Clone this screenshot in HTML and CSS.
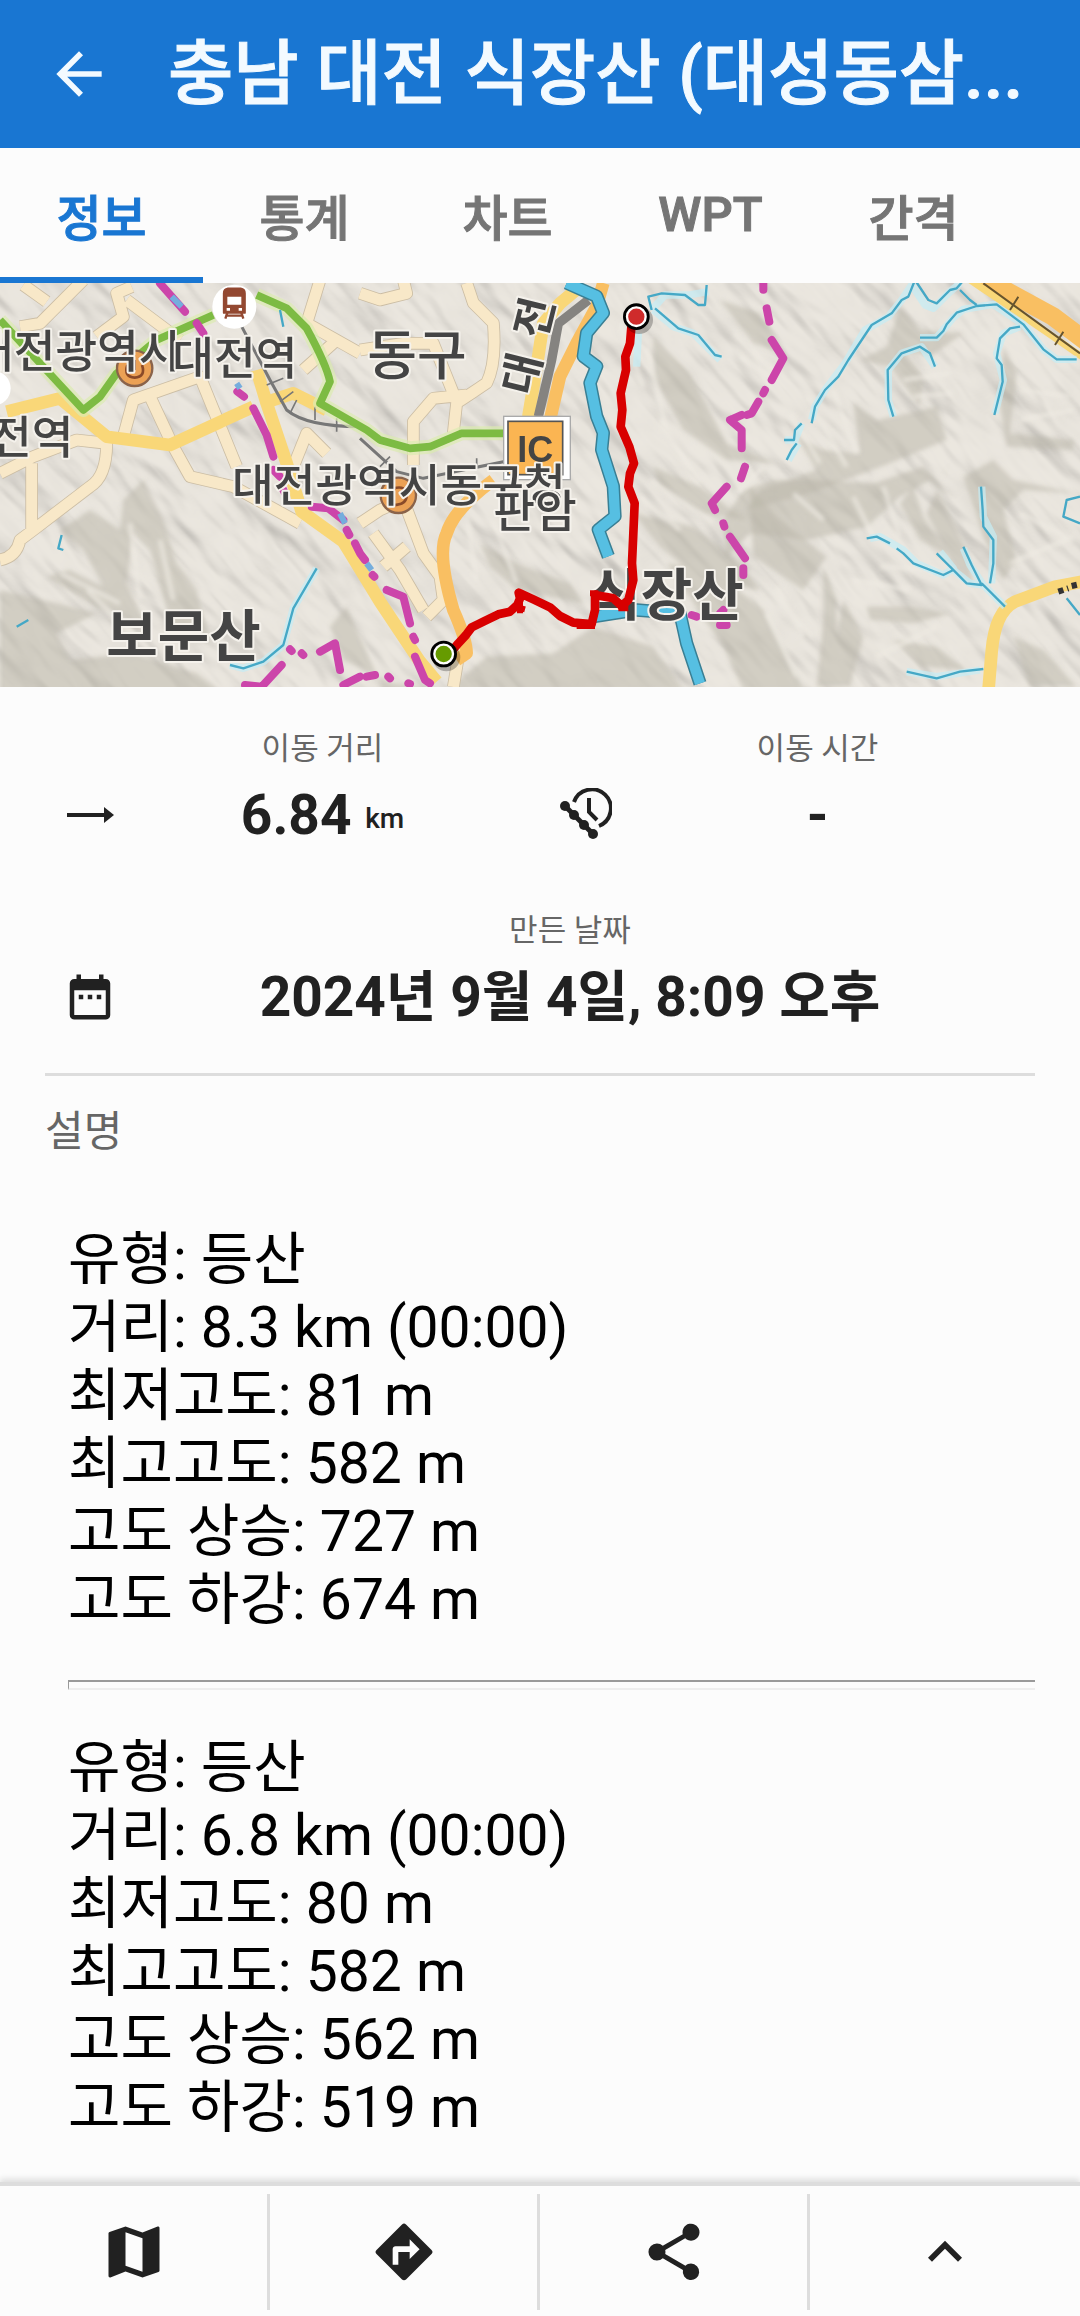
FILE: index.html
```html
<!DOCTYPE html>
<html lang="ko">
<head>
  <meta charset="utf-8">
  <meta name="viewport" content="width=device-width, initial-scale=1">
  <title>충남 대전 식장산</title>
  <link rel="stylesheet" href="styles.css">
</head>
<body>

<header class="appbar">
  <button class="back" aria-label="뒤로">
    <svg viewBox="0 0 24 24"><path d="M20 11H7.83l5.59-5.59L12 4l-8 8 8 8 1.41-1.41L7.83 13H20z"/></svg>
  </button>
  <h1>충남 대전 식장산 (대성동삼...</h1>
</header>

<nav class="tabs" role="tablist">
  <button role="tab" class="tab active" aria-selected="true">정보</button>
  <button role="tab" class="tab">통계</button>
  <button role="tab" class="tab">차트</button>
  <button role="tab" class="tab">WPT</button>
  <button role="tab" class="tab">간격</button>
</nav>

<main>
  <svg class="map" viewBox="0 9 3240 1212" preserveAspectRatio="xMidYMid slice" role="img" aria-label="지도">
    <defs>
      <filter id="relief" x="0" y="0" width="100%" height="100%">
        <feTurbulence type="fractalNoise" baseFrequency="0.003 0.008" numOctaves="3" seed="11"/>
        <feDiffuseLighting surfaceScale="65" diffuseConstant="1.2" lighting-color="#e9e5dc">
          <feDistantLight azimuth="235" elevation="58"/>
        </feDiffuseLighting>
      </filter>
      <filter id="soft"><feGaussianBlur stdDeviation="7"/></filter>
    </defs>

    <rect class="land" y="9" width="3240" height="1212"/>
    <g transform="rotate(48 1620 600)" opacity=".2">
      <rect x="-300" y="-1400" width="3900" height="4000" filter="url(#relief)"/>
    </g>

    <!-- hill shading -->
    <g class="shade" filter="url(#soft)">
      <path d="M430 600l-60 60-10 90-90-60-90 60 70 60 60 110-100-50-70 20 150 90 150 60-60-130 20-150 50 50 70 250 110 30-40-160-60-80-40-130z"/>
      <path d="M0 930l130 30 160 40-120 60 40 80 190-20 190 60 120 90H0z"/>
      <path d="M1040 980l-50 60 40 100 150 70 160 20 120-100 200-10 120-80 180 60 90 130H1150z"/>
      <path d="M1440 790l110 60 160 60 40 60-200-40-80-70zM1960 170l110 110 110 210 150 60-150-10-130-90-90-160zM1960 560l140 60 140 100-130-20-130-80z"/>
      <path d="M1900 700l180 40 140 110 60 80-180-30-120-100zM2000 850l140 20 150 120 120 240H2230l-60-130z"/>
      <path d="M2160 60l120 40 70 120-90-30zM2560 370l70 50 180-40 30 100-170 70-240 90-190 50 40-60 170-60-60-100 80 40 110 10z"/>
      <path d="M2440 600l180 10 150-50 80 90-60-50-90 50-100 90-180 40-170-20-70 70-10-110 60-90 90-30z"/>
      <path d="M2250 620l70 80 70 60 90 70-70 100-150-100zM2470 860l40 100v220l40 40h-100l20-200zM2530 960l60 110-40 150h-70z"/>
      <path d="M2700 80l60 70 130 10-100 70-80-20 60 80-10 90-90-120-90-20 80-40zM3010 200l40 80-20 180 190 20v30l-200-10-20-120zM2980 540l60 60 190 40-160-10-60 60 40 150-40 60-60-130-60-180z"/>
      <path d="M2850 540l-40 90 90 180 20 110-70-80-70-140zM2740 620l30 90 80 120-90-50-60-110zM3040 1070l90 40 100 110h-140z"/>
      <path d="M2600 980l130 0 120 20-110 30-130-10zM2680 1080l130 20 90 70-140-10z"/>
    </g>
    <g class="light" filter="url(#soft)">
      <path d="M2200 160l130 120M2220 230l90 60M2370 400l90 150M2420 350l120 210M2500 330l70 190M2290 560l-80 80M2380 640l90 80M2560 650l60 120M2650 620l50 150M2850 280l-140 20M2860 340l-120 10M3060 330l150 20M3060 420l160-30M3030 850l190-80M3060 700l160 80M2560 900l170 30M2640 860l180 10M2630 1130l180-90M2250 870l190 200M2330 920l80 150M2300 1000l90 190M1860 130l70 190M1940 200l60 250M1980 420l120 190M1950 600l190 130M1920 650l120 100M1400 700l30 200M1480 720l70 190M390 730l30 230M480 780l40 180M180 880l180 90M260 930l200 190"/>
    </g>

    <!-- minor roads -->
    <g class="road-edge">
      <path d="M0 840q50-10 60-60l40-30 170-130q50-30 50-130l-90-10-130 50-100 50M95 550v200M60 140l60-10L250 0M70 15l70 50M395 20l-45 20 20 70-80 60M380 60l160 120M370 470l30-110 200-70 110 270M450 350l70 150 50 90 130 30 200 110M960 0l-40 130 160 90M1010 180l-100 90M880 560l40-100 60 60"/>
      <path d="M1080 40l60 20 80-20-10-40M1400 9l20 60 60 60q10 120-20 180l-90 60-10 90M1080 210l130-20 90 0 60 150M1400 345l-100 10-60 70v130M1080 730l60-40 70-30 60 160 50 70 10 70-50 50M1120 760l80 110 70 120M1150 860l70-60M1360 1221l20-120"/>
    </g>
    <g class="road">
      <path d="M0 840q50-10 60-60l40-30 170-130q50-30 50-130l-90-10-130 50-100 50M95 550v200M60 140l60-10L250 0M70 15l70 50M395 20l-45 20 20 70-80 60M380 60l160 120M370 470l30-110 200-70 110 270M450 350l70 150 50 90 130 30 200 110M960 0l-40 130 160 90M1010 180l-100 90M880 560l40-100 60 60"/>
      <path d="M1080 40l60 20 80-20-10-40M1400 9l20 60 60 60q10 120-20 180l-90 60-10 90M1080 210l130-20 90 0 60 150M1400 345l-100 10-60 70v130M1080 730l60-40 70-30 60 160 50 70 10 70-50 50M1120 760l80 110 70 120M1150 860l70-60M1360 1221l20-120"/>
    </g>

    <!-- main roads -->
    <path class="major" d="M20 395l160-40 140 115 190 25 250-115M770 270l30 100 60 180 45 145 125 90 110 180 120 180 50 60M790 370l90-30 100 50"/>
    <path class="expressway" d="M1810 9l-20 70-60 110-50 100-30 130M1480 600q-120 90-140 160-30 60 20 230 40 90 40 130l-30 20"/>
    <path class="major" d="M1740 20l-60 50-50 60-20 130-25 150"/>
    <path class="rail-wide" d="M1765 60l-90 70-20 110-40 170"/>
    <path class="rail" d="M720 130l90 170 50 90q60 50 220 50M1080 475l110 100 80 20 240-50"/>
    <path class="rail-ticks" d="M800 315l50-20M840 365l40-30M870 400l20-40M945 420v-40M1010 455v-40M1140 560l30-30M1430 565v-30"/>
    <path class="metro-glow" d="M0 120l250 270 50-40 50-70 120-100 170-75M770 45l90 40 60 60q60 110 70 160l-30 65 140 80 40 30 90 25 60-5 95-40h140"/>
    <path class="metro" d="M0 120l250 270 50-40 50-70 120-100 170-75M770 45l90 40 60 60q60 110 70 160l-30 65 140 80 40 30 90 25 60-5 95-40h140"/>
    <path class="expressway wide" d="M2940 -10l220 120 120 90"/>
    <path class="major narrow" d="M2910 0l220 150 130 90"/>
    <path class="tie" d="M2950 10l290 210M3055 50l-25 40M3190 155l-25 40"/>
    <path class="major" d="M2965 1235l10-120q10-120 70-150l120-45 80-15"/>
    <path class="dots" d="M3175 935l30-10M3215 918l25-6"/>

    <!-- streams -->
    <g class="stream-glow">
      <path d="M2435 420l10-40 30-50 60-80 60-100 70-40 40-50 30-45 40 60 25 10 50-50 30-25M2760 173h50l50-60 30-25 90-15 90 60 60 75 40 30h60M3060 140l-50 20-20 60 20 80-25 100M2680 410l-15-50 0-90 40-50 60-20 40 60M2405 430l-20 50-30 0M2395 490l-30 50"/>
      <path d="M2610 775l30-5 70 40 40 40 80 35 30-20-40-50M2860 870l50 40 40 5-40-60-20-50M2945 910l70 70M2975 910l5-140-30-60-5-90M2720 1175l90 15 130-20"/>
      <path d="M950 865l-70 120-30 110-60 50-60 20-40-10M1955 90l40-45h70l60-10M1960 90l60 50 60 20 80 80M1915 160l-5 100"/>
    </g>
    <g class="stream">
      <path d="M2435 430l10-50 30-50 40-40 30-50 70-105 60-35 30-40 20-10 20-50 40 60 25 10 40-40 20-5 30-35M2760 173h50l20-20 10-20 30-35 60-20 60-5 20 15 60 45 60 75 40 30h60M3060 140l-30 5-30 30-10 60 15 20 3 50-25 100M2680 410l-15-50-2-90 42-50 55-20 30 20 15 40M2405 430l-20 20-3 30-30 0M2390 490l-15 20-15 30"/>
      <path d="M2600 775l30-5 40 20M2690 805l20 15 30 30 90 35 30-15-50-50M2850 860l50 50 45 5-30-60-25-55M2945 910l70 70M2970 910l10-60v-70l-30-40-2-50-5-70M2720 1175l90 20 70-20 70-8M2880 30l30 30 20 15M3240 650l-40 10-10 50 50 20M3200 955l40 50"/>
      <path d="M950 865l-70 120-30 110-60 50-60 20-40-10M185 765l-10 40 15 5M50 1040l35-20M840 90l10 50M1955 90l-10-40 40-10 70 5 40 30h20l5-60M1965 85l70 60 60 20 50 60 20 5"/>
    </g>

    <!-- river -->
    <g class="river-edge">
      <path d="M1700 9l90 40 20 50-50 60-10 70 40 30-20 50 20 100 20 50-5 50 35 110 5 90-50 40 30 80M1780 1010l130-20 130 10 20 90 40 120"/>
    </g>
    <path class="river" d="M1700 9l90 40 20 50-50 60-10 70 40 30-20 50 20 100 20 50-5 50 35 110 5 90-50 40 30 80M1780 1010l130-20 130 10 20 90 40 120"/>

    <!-- district borders -->
    <g class="border">
      <path d="M480 10l75 85M590 130l20 30M712 335l20 15M760 385l40 80 20 65M820 570l20 20M845 620l10 20M935 680l50 5 45 35M1040 750l8 15M1065 790l15 30 15 20M1118 885l5 5M1160 930l50 20 20 80M1240 1070l5 10M1245 1130l30 70 15 10M960 1115l45-25 15 80M870 1108l5 5M905 1120l5 5M735 1215l50 5 60-65M1030 1215l50-25M1100 1190l25-5M1165 1190l5 5M1225 1210l5 2"/>
      <path d="M2290 9l0 20M2300 85l8 40M2315 180l35 55-35 65M2295 330l-5 10M2275 365l-20 35-15 5M2225 405l-35 15 35 30v55M2235 560l-12 35M2180 620l-45 50 10 20M2170 730l3 10M2190 770l45 65M2230 865l0 20M2170 990l-10 10M2090 1010l-15-5M2180 1035l-20 0"/>
    </g>
    <path class="border-blue" d="M515 50l30 30M1100 850l15 20M1020 700l15 30M710 310l10 15"/>

    <!-- place icons -->
    <circle cx="703" cy="80" r="66" fill="#fff"/>
    <g class="train">
      <path class="body" d="M672 40q0-12 12-14h38q12 2 12 14v58H672z"/>
      <path d="M682 98l-6 18M724 98l6 18M676 107h54"/>
      <path class="pane" d="M682 50h42v24h-42zM680 84h10v8h-10zM716 84h10v8h-10z"/>
    </g>
    <circle cx="-20" cy="325" r="52" fill="#fff"/>
    <g class="spot">
      <circle cx="404" cy="265" r="53"/><path d="M382 255q-12 35 22 38 34-3 22-38M404 240v30"/>
      <circle cx="1195" cy="646" r="53"/><path d="M1180 625q40-10 40 20t-40 30"/>
    </g>
    <rect class="ic-frame" x="1511" y="409" width="200" height="190"/>
    <rect class="ic" x="1524" y="424" width="164" height="160"/>

    <!-- labels -->
    <g class="place">
      <text x="-84" y="264">대전광역시</text>
      <text x="517" y="286">대전역</text>
      <text x="-30" y="522">전역</text>
      <text x="696" y="666">대전광역시동구청</text>
      <text x="1480" y="744">판암</text>
      <text class="town" x="1102" y="286">동구</text>
      <text class="town street" transform="translate(1596 350) rotate(-76)">대</text>
      <text class="town street" transform="translate(1634 182) rotate(-76)">전</text>
      <text class="peak" x="319" y="1127">보문산</text>
      <text class="peak" x="1768" y="1004">식장산</text>
      <text class="ic-text" x="1552" y="546">IC</text>
    </g>

    <!-- track -->
    <path class="track" d="M1350 1120L1375 1090 1398 1065 1415 1042 1450 1025 1495 1003 1530 995 1552 975 1560 955 1556 938 1600 958 1650 982 1680 1008 1720 1028 1775 1032 1785 990 1785 945 1840 955 1865 978 1885 960 1900 900 1896 850 1900 760 1904 670 1885 620 1890 580 1902 550 1888 500 1862 440 1867 390 1862 340 1878 270 1876 230 1890 190 1895 130"/>
    <path class="track thin" d="M1545 980l30 8M1560 1000v-60M1770 940h25M1855 985h30M1730 1038h55"/>
    <g class="pin">
      <circle class="drop" cx="1917" cy="120" r="38"/><circle cx="1909" cy="110" r="36"/><circle class="end" cx="1909" cy="110" r="28"/>
      <circle class="drop" cx="1339" cy="1132" r="38"/><circle cx="1331" cy="1122" r="36"/><circle class="start" cx="1331" cy="1122" r="28"/>
    </g>
  </svg>

  <section class="stats">
    <div class="stat">
      <svg class="icon" viewBox="0 0 54 54"><path d="M4 25h37v-6l10 8-10 8v-6H4z"/></svg>
      <span class="label">이동 거리</span>
      <span class="value">6.84 <small>km</small></span>
    </div>
    <div class="stat">
      <svg class="icon" viewBox="0 0 54 54">
        <g class="line">
          <path d="M16 14a19 19 0 1 1 25 24" stroke-width="4"/>
          <path d="M31 10v14l8 8" stroke-width="4"/>
          <path d="M7 18l28 28" stroke-width="5"/>
        </g>
        <circle cx="7" cy="18" r="5"/><circle cx="16" cy="27" r="5"/><circle cx="26" cy="37" r="5"/><circle cx="35" cy="46" r="5"/>
      </svg>
      <span class="label">이동 시간</span>
      <span class="value">-</span>
    </div>
    <div class="stat full">
      <svg class="icon" viewBox="0 0 24 24"><path d="M9 11H7v2h2zm4 0h-2v2h2zm4 0h-2v2h2zm2-7h-1V2h-2v2H8V2H6v2H5a2 2 0 0 0-2 2v14c0 1.100.9 2 2 2h14c1.100 0 2-.9 2-2V6c0-1.100-.9-2-2-2zm0 16H5V9h14z"/></svg>
      <span class="label">만든 날짜</span>
      <span class="value">2024년 9월 4일, 8:09 오후</span>
    </div>
  </section>

  <section class="description">
    <h2>설명</h2>
    <div class="text">
      <p>유형: 등산<br>
        거리: 8.3 km (00:00)<br>
        최저고도: 81 m<br>
        최고고도: 582 m<br>
        고도 상승: 727 m<br>
        고도 하강: 674 m</p>
      <hr>
      <p>유형: 등산<br>
        거리: 6.8 km (00:00)<br>
        최저고도: 80 m<br>
        최고고도: 582 m<br>
        고도 상승: 562 m<br>
        고도 하강: 519 m</p>
    </div>
  </section>
</main>

<footer class="bottombar">
  <button aria-label="지도">
    <svg viewBox="0 0 24 24"><path d="M20.500 3l-.16.03L15 5.100 9 3 3.360 4.900c-.21.07-.36.25-.36.480V20.500c0 .28.22.5.5.5l.16-.03L9 18.900l6 2.100 5.640-1.900c.21-.07.36-.25.36-.48V3.500c0-.28-.22-.5-.5-.5zM15 19l-6-2.110V5l6 2.110V19z"/></svg>
  </button>
  <button aria-label="길찾기">
    <svg viewBox="0 0 24 24"><path d="M21.710 11.290l-9-9a1 1 0 0 0-1.410 0l-9 9a1 1 0 0 0 0 1.410l9 9c.39.39 1.020.39 1.410 0l9-9a1 1 0 0 0 0-1.410zM14 14.500V12h-4v4.500H8V11c0-.55.45-1 1-1h5V7.500l3.500 3.500z"/></svg>
  </button>
  <button aria-label="공유">
    <svg viewBox="0 0 24 24"><path d="M18 16.080c-.76 0-1.440.3-1.960.77L8.910 12.700a3.300 3.300 0 0 0 0-1.400l7.050-4.110A3 3 0 1 0 15 5c0 .24.040.47.090.7L8.040 9.810a3 3 0 1 0 0 4.380l7.120 4.160a2.900 2.900 0 1 0 2.840-2.270z"/></svg>
  </button>
  <button aria-label="더보기">
    <svg viewBox="0 0 24 24"><path d="M12 8l-6 6 1.410 1.410L12 10.830l4.590 4.580L18 14z"/></svg>
  </button>
</footer>

</body>
</html>
```

FILE: styles.css
```css
* {
  box-sizing: border-box;
}
body {
  margin: 0;
  min-height: 100vh;
  display: flex;
  flex-direction: column;
  background: #fcfcfc;
  color: #212121;
  font-family: Roboto, "Noto Sans CJK KR", sans-serif;
}
button {
  padding: 0;
  border: 0;
  background: none;
  color: inherit;
  font: inherit;
}
h1, h2, p {
  margin: 0;
}
svg {
  display: block;
  fill: currentColor;
}
main {
  flex: 1;
}

/* header */
.appbar {
  display: flex;
  align-items: center;
  height: 148px;
  padding-right: 32px;
  background: #1976d2;
  color: #f3faff;
}
.back {
  flex: none;
  width: 168px;
  padding-left: 45px;
}
.back svg {
  width: 68px;
  height: 68px;
}
.appbar h1 {
  flex: 1;
  min-width: 0;
  overflow: hidden;
  white-space: nowrap;
  font-size: 71px;
  font-weight: 500;
  line-height: 96px;
  -webkit-text-stroke: 1px;
}
.tabs {
  display: flex;
  height: 135px;
}
.tab {
  width: 203px;
  border-bottom: 6px solid transparent;
  border-top: 4px solid transparent;
  color: #757575;
  font-size: 49px;
  font-weight: 500;
  -webkit-text-stroke: 1px;
}
.tab.active {
  border-bottom-color: #1976d2;
  color: #1976d2;
}

/* map */
.map {
  width: 100%;
  height: auto;
}
.map path {
  fill: none;
  stroke-linejoin: round;
}
.land { fill: #e7e3dc; }
.map .shade path { fill: #b9b6a8; opacity: .5; }
.map .light path { stroke: #efebe3; stroke-width: 13; opacity: .75; }
.road-edge path { stroke: #cbbda4; stroke-width: 38; }
.road path { stroke: #f8e8c8; stroke-width: 33; }
.map .major { stroke: #f9d778; stroke-width: 38; }
.map .narrow { stroke-width: 20; }
.map .expressway { stroke: #f9bf62; stroke-width: 38; }
.map .wide { stroke-width: 56; }
.map .rail { stroke: #777; stroke-width: 9; }
.map .rail-ticks { stroke: #777; stroke-width: 5; }
.map .rail-wide { stroke: #858380; stroke-width: 28; }
.map .tie { stroke: #66532e; stroke-width: 6; }
.map .dots { stroke: #333; stroke-width: 18; stroke-dasharray: 16 12; }
.map .metro-glow { stroke: #dcebb0; stroke-width: 42; opacity: .7; }
.map .metro { stroke: #7dbb43; stroke-width: 23; }
.stream-glow path { stroke: #c5edf5; stroke-width: 22; opacity: .7; }
.stream path { stroke: #45a8c6; stroke-width: 7; }
.river-edge path { stroke: #397f94; stroke-width: 40; }
.map .river { stroke: #56bfe2; stroke-width: 31; }
.border path { stroke: #cc45aa; stroke-width: 24; stroke-linecap: round; }
.map .border-blue { stroke: #75addd; stroke-width: 18; }
.train path { stroke: #934831; stroke-width: 7; }
.map .train .body { fill: #934831; }
.map .train .pane { fill: #fff; stroke: none; }
.spot circle { fill: #eba155; stroke: #8a634a; stroke-width: 7; }
.spot path { stroke: #8a4a28; stroke-width: 8; }
.ic-frame { fill: #fff; stroke: #aaa; stroke-width: 4; }
.ic { fill: #fbb552; stroke: #555; stroke-width: 5; }
.place text {
  fill: #444;
  stroke: #f5f2ec;
  stroke-width: 12;
  stroke-linejoin: round;
  paint-order: stroke;
  font-family: "Noto Sans CJK KR", sans-serif;
  font-size: 136px;
  font-weight: 500;
}
.place .town { font-size: 162px; }
.place .street { font-size: 130px; font-weight: 700; }
.place .peak { font-size: 168px; font-weight: 700; }
.place .ic-text {
  stroke: none;
  font-family: "Liberation Sans", sans-serif;
  font-size: 108px;
  font-weight: 700;
}
.map .track { stroke: #d80000; stroke-width: 26; }
.map .thin { stroke-width: 18; }
.pin circle { fill: #000; stroke: #000; stroke-width: 8; }
.pin .drop { opacity: .25; }
.pin .start { fill: #669b00; stroke: #fff; stroke-width: 7; }
.pin .end { fill: #cf2b2b; stroke: #fff; stroke-width: 7; }

/* stats */
.stats {
  display: grid;
  grid-template-columns: 1fr 1fr;
  row-gap: 66px;
  margin: 0 45px;
  padding: 44px 0;
  border-bottom: 3px solid #ddd;
}
.stat {
  display: grid;
  grid-template-columns: 90px 1fr;
  row-gap: 16px;
  padding-right: 30px;
  text-align: center;
}
.full {
  grid-column: 1 / 3;
}
.icon {
  grid-row: 2;
  justify-self: center;
  align-self: center;
  width: 54px;
  height: 54px;
}
.line {
  fill: none;
  stroke: currentColor;
}
.label {
  grid-column: 2;
  color: #666;
  font-size: 31px;
  line-height: 36px;
}
.value {
  grid-column: 2;
  font-size: 55px;
  font-weight: 700;
  line-height: 64px;
}
.value small {
  font-size: 28px;
  font-weight: 500;
  vertical-align: 6px;
  line-height: 28px;
}

/* description */
.description {
  padding: 32px 45px 38px;
}
.description h2 {
  color: #666;
  font-size: 42px;
  font-weight: 400;
  line-height: 48px;
}
.text {
  padding: 70px 0 0 23px;
  color: #000;
  font-size: 57px;
  line-height: 68px;
}
.text hr {
  height: 10px;
  margin: 46px 0 44px;
  border: solid #9a9a9a;
  border-width: 2px 0 2px 1px;
  border-bottom-color: #eee;
}

/* bottom bar */
.bottombar {
  display: grid;
  grid-template-columns: repeat(4, 1fr);
  padding: 8px 0 6px;
  border-top: 4px solid #ddd;
  box-shadow: 0 -3px 6px #ddd;
}
.bottombar button {
  height: 116px;
  border-right: 3px solid #ddd;
}
.bottombar button:last-child {
  border-right: 0;
}
.bottombar svg {
  width: 68px;
  height: 68px;
  margin: 0 auto;
}
```
